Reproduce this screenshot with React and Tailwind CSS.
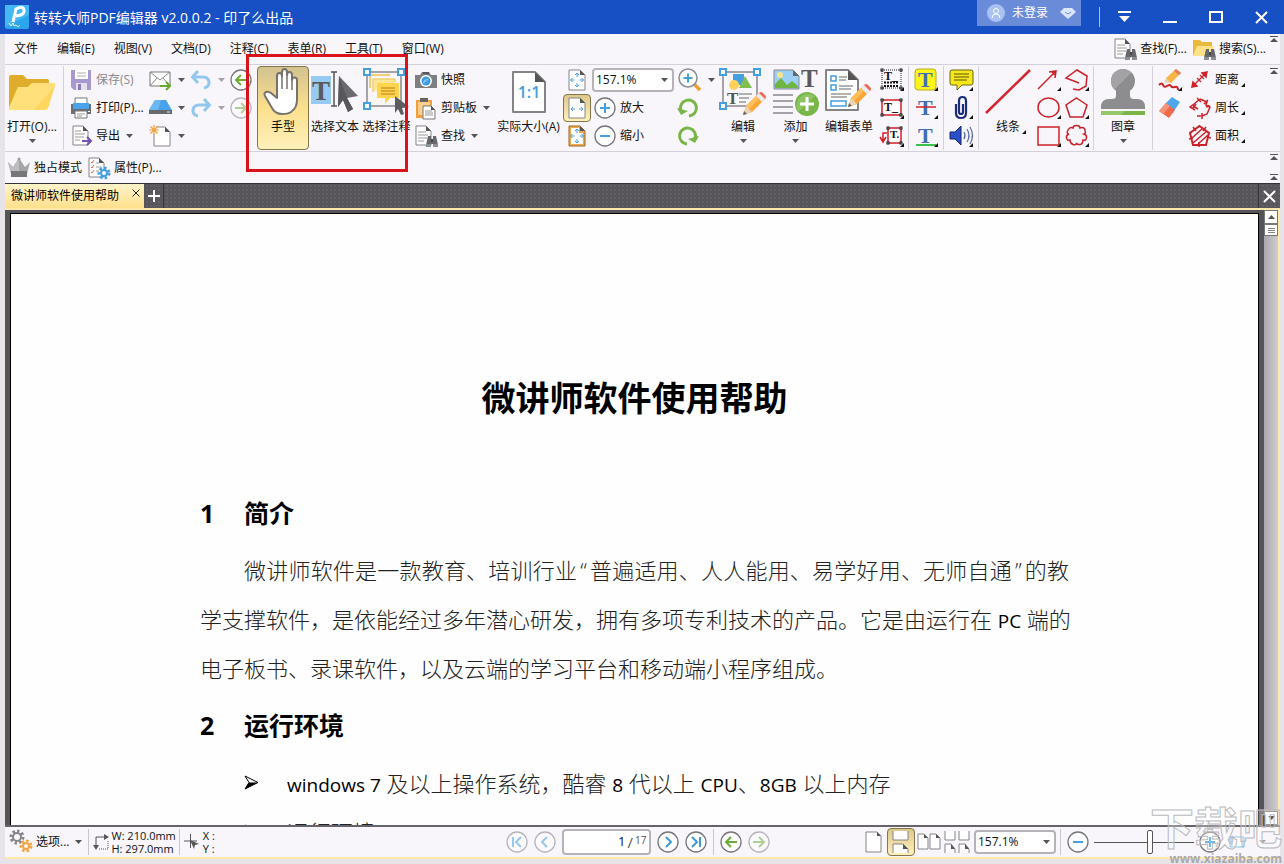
import { useState } from 'react';

const MENUS = ['文件', '编辑(E)', '视图(V)', '文档(D)', '注释(C)', '表单(R)', '工具(T)', '窗口(W)'];
const ZOOMS = ['50%', '100%', '157.1%', '200%'];

function Svg({ w, h = w, children, className = '' }) {
  return (
    <svg width={w} height={h} viewBox={`0 0 ${w} ${h}`} fill="none" className={`shrink-0 overflow-visible ${className}`} aria-hidden="true">
      {children}
    </svg>
  );
}

function Caret({ faded }) {
  return (
    <Svg w={7} h={4}>
      <path d="M0 0h7L3.5 4z" fill={faded ? '#a5a3a8' : '#555'} />
    </Svg>
  );
}

// small black corner that marks a tool with variants
const Corner = ({ x = 24, y = 23 }) => <path d={`M${x} ${y - 4}v4h-4z`} fill="#111" />;

/* ---------- drawing parts shared by several icons ---------- */

const PageShape = ({ x = 0, y = 0, w = 18, h = 20, c = 5, fill = '#fff', stroke = '#858388', sw = 1 }) => (
  <g transform={`translate(${x} ${y})`}>
    <path d={`M1 1h${w - 2 - c}l${c} ${c}v${h - 2 - c}h-${w - 2}z`} fill={fill} stroke={stroke} strokeWidth={sw} strokeLinejoin="round" />
    <path d={`M${w - 1 - c} 1v${c}h${c}z`} fill="#555" />
  </g>
);

const Binoculars = ({ x, y }) => (
  <g transform={`translate(${x} ${y})`}>
    <path d="M2 0h3v3h2V0h3l2 9v2H7V8H5v3H0V9z" fill="#66686c" />
    <path d="M0 8h5v3H0zM7 8h5v3H7z" fill="#8b8f96" />
    <path d="M5 3h2v3H5z" fill="#45474b" />
  </g>
);

const Pencil = ({ x, y }) => (
  <g transform={`translate(${x} ${y})`}>
    <path d="M0 24l3-9 13-13 6 6L9 21z" fill="#fba738" />
    <path d="M13 5l3-3 6 6-3 3z" fill="#e8edf5" />
    <path d="M16 2q2-2 4 0l2 2q2 2 0 4z" fill="#ee6b53" />
    <path d="M3 15l10-10 3 3L6 18z" fill="#ffc05b" />
    <path d="M0 24l3-9 6 6z" fill="#e9d3b2" />
    <path d="M0 24l1-4 3 3z" fill="#666" />
  </g>
);

const Plus = ({ cx, cy, r = 4, color = '#439fe0' }) => (
  <path d={`M${cx - r} ${cy}h${r * 2}M${cx} ${cy - r}v${r * 2}`} stroke={color} strokeWidth="2" />
);

const FourArrows = ({ c = '#4b9fdb' }) => (
  <g stroke={c}>
    <path d="M10 4v4M10 14v4M3.500 11h4M12.500 11h4" />
    <path d="M8 6l2-2 2 2M8 16l2 2 2-2M5.500 9l-2 2 2 2M14.500 9l2 2-2 2" />
  </g>
);

/* ---------- icons ---------- */

const FolderBig = () => (
  <Svg w={48} h={40}>
    <path d="M1 5q0-2 2-2h12l4 4h20q2 0 2 2v25H1z" fill="#e0ac2c" />
    <path d="M1 36L10 15h10l4-4h21q3 0 2 3l-7 22q-1 2-3 2H3q-2 0-2-2z" fill="#ffd75e" />
    <path d="M1 36L10 15h10l4-4h21q3 0 2 3L26 38H3q-2 0-2-2z" fill="#ffe07a" />
  </Svg>
);

const SaveIcon = () => (
  <Svg w={22}>
    <path d="M1 1h20v20H4l-3-3z" fill="#a898cf" />
    <path d="M5 1h13v9H5z" fill="#fff" />
    <path d="M7 4h9M7 7h9" stroke="#aaa" />
    <path d="M6 14h11v7H6z" fill="#e4e1ea" />
    <path d="M8 15h3v6H8z" fill="#8b7bb8" />
  </Svg>
);

const PrintIcon = () => (
  <Svg w={22}>
    <path d="M5 7V1h12v6" fill="#fff" stroke="#777" />
    <path d="M1 7h20v10H1z" fill="#6b6e72" />
    <path d="M3 6h16v6H3z" fill="#48a3ea" />
    <path d="M18 14h2v1h-2z" fill="#fff" />
    <path d="M5 14h12v7H5z" fill="#fff" stroke="#777" />
    <path d="M7 17h8M7 19h5" stroke="#999" />
  </Svg>
);

const ExportIcon = () => (
  <Svg w={22}>
    <PageShape x={2} y={0} w={17} h={21} />
    <path d="M5 6h6M5 9h10M5 12h9M5 15h5" stroke="#999" />
    <path d="M12 16h8M17 12l4 4-4 4" stroke="#7650b0" strokeWidth="2" />
  </Svg>
);

const MailIcon = () => (
  <Svg w={23} h={22}>
    <path d="M1 3h20v14H1z" fill="#fff" stroke="#77757a" />
    <path d="M1 3l10 8L21 3M1 17l7-8M21 17l-7-8" stroke="#88868b" />
    <path d="M11 17h9M17 13l4 4-4 4" stroke="#68a92b" strokeWidth="2" />
  </Svg>
);

const ScanIcon = () => (
  <Svg w={23} h={22}>
    <path d="M6 3h11l6 10H0z" fill="#48a3ea" />
    <path d="M6 3h6L9 13H0z" fill="#6db8f2" />
    <path d="M0 13h23v4H0z" fill="#66696e" />
    <path d="M18 15h3" stroke="#e8e8e8" />
  </Svg>
);

const NewIcon = () => (
  <Svg w={23} h={22}>
    <PageShape x={4} y={1} w={18} h={21} />
    <circle cx="5" cy="5" r="4" fill="#f8f6fa" />
    <path d="M5 0v10M0 5h10M1.500 1.500l7 7M8.500 1.500l-7 7" stroke="#f0a23a" strokeWidth="1.200" />
  </Svg>
);

const UndoIcon = ({ flip }) => (
  <Svg w={22}>
    <g transform={flip ? 'translate(22 0) scale(-1 1)' : undefined} stroke="#93c7ee" strokeWidth="3">
      <path d="M3 8h10q6 0 6 6 0 4-5 5" />
      <path d="M8 2L2.500 8 8 14" />
    </g>
  </Svg>
);

const CIRCLE_ICONS = {
  back: <path d="M17 11H6M11 6l-5 5 5 5" stroke="#6cab35" strokeWidth="2" />,
  forward: <path d="M5 11h11M11 6l5 5-5 5" stroke="#6cab35" strokeWidth="2" />,
  first: <path d="M7 6v10M15 6l-5 5 5 5" stroke="#3d98dc" strokeWidth="2" />,
  prev: <path d="M13 6l-5 5 5 5" stroke="#3d98dc" strokeWidth="2" />,
  next: <path d="M9 6l5 5-5 5" stroke="#3d98dc" strokeWidth="2" />,
  last: <path d="M15 6v10M7 6l5 5-5 5" stroke="#3d98dc" strokeWidth="2" />,
  plus: <Plus cx={11} cy={11} r={5} />,
  minus: <path d="M6 11h10" stroke="#439fe0" strokeWidth="2" />,
};

const CircleIcon = ({ kind, faded }) => (
  <Svg w={22} className={faded ? 'opacity-50' : ''}>
    <circle cx="11" cy="11" r="10" fill="#fff" stroke="#77757a" strokeWidth="1.300" />
    {CIRCLE_ICONS[kind]}
  </Svg>
);

const HandIcon = () => (
  <Svg w={40} h={50}>
    <path
      d="M14 31V9q0-3 2.500-3T19 9V5q0-3 2.500-3T24 5v3q0-3 2.500-3T29 8v5q0-2.500 2.500-2.500T34 13v20q0 8-6 12-3 2-9 2-7 0-10-6L2 29q-1.500-3 1-4t5 1z"
      fill="#fff" stroke="#77736c" strokeWidth="2" strokeLinejoin="round" />
    <path d="M19 8v14M24 8v14M29 12v11" stroke="#77736c" strokeWidth="1.500" />
  </Svg>
);

const SelectTextIcon = () => (
  <Svg w={48} h={48}>
    <path d="M0 8h20v28H0z" fill="#96caf5" />
    <text x="1" y="32" fontSize="27" fontWeight="bold" fill="#5a5a5e" className="font-['Liberation_Serif',serif]">T</text>
    <path d="M20 4h6M20 38h6M23 4v34" stroke="#555" strokeWidth="1.500" />
    <path d="M28 8l19 20-11 2 6 11-5 3-5-12-5 7z" fill="#6b6a6e" />
    <path d="M28 8l8 22 6 11-5 3-5-12-5 7z" fill="#58575b" />
  </Svg>
);

const SelectNoteIcon = () => (
  <Svg w={48} h={48}>
    <path d="M4 4h34v34H4z" stroke="#8a888d" strokeWidth="1.500" />
    <path d="M7 20V7h20" stroke="#f1c14b" strokeWidth="1.500" />
    <path d="M10 24V11h22v3" fill="#ffe697" stroke="#f1c14b" />
    <path d="M14 15h22v15h-9l-5 6v-6h-8z" fill="#ffd44c" />
    <path d="M18 20h14M18 23h14M18 26h14" stroke="#d19a2c" strokeWidth="1.500" />
    <path d="M1 1h6v6H1zM35 1h6v6h-6zM1 35h6v6H1z" fill="#fff" stroke="#439fe0" strokeWidth="2" />
    <path d="M32 28l14 11-7 1 2 6-3 1-3-6-3 4z" fill="#5d5c60" />
  </Svg>
);

const CameraIcon = () => (
  <Svg w={22}>
    <path d="M0 6h5l2-3h7l2 3h6v13H0z" fill="#7d7f83" />
    <path d="M8 3h6v2H8z" fill="#55575b" />
    <circle cx="11" cy="12" r="6" fill="#fff" />
    <circle cx="11" cy="12" r="4.500" fill="#3e9ae4" />
    <path d="M8 15a4.500 4.500 0 0 1 6-5z" fill="#7cc2f5" />
  </Svg>
);

const ClipboardIcon = () => (
  <Svg w={22} h={23}>
    <path d="M1 3h16v18H1z" fill="#f3a03b" />
    <path d="M3 5h12v13H3z" fill="#ffd08c" />
    <path d="M5 1h8v4H5z" fill="#666" />
    <path d="M8 9h8l4 4v9H8z" fill="#fff" stroke="#777" />
    <path d="M16 9v4h4z" fill="#555" />
    <path d="M10 14h7M10 16h8M10 18h8" stroke="#999" />
  </Svg>
);

const FindIcon = () => (
  <Svg w={22} h={23}>
    <PageShape x={0} y={0} w={17} h={21} />
    <path d="M3 7h8M3 10h10M3 13h9M3 16h6" stroke="#999" />
    <Binoculars x={11} y={11} />
  </Svg>
);

const SearchFolderIcon = () => (
  <Svg w={22} h={23}>
    <path d="M0 2h7l2 2h10v14H0z" fill="#e8b93b" />
    <path d="M0 18L4 8h17l-4 10z" fill="#ffe28a" />
    <Binoculars x={11} y={11} />
  </Svg>
);

const ActualSizeIcon = () => (
  <Svg w={34} h={42}>
    <PageShape x={0} y={0} w={34} h={42} c={10} sw={2} />
    <text x="17" y="27" textAnchor="middle" fontSize="16" fontWeight="600" fill="#439fe0">1:1</text>
  </Svg>
);

const FitPageIcon = () => (
  <Svg w={20} h={22}>
    <PageShape x={1} y={0} w={18} h={22} />
    <FourArrows />
  </Svg>
);

const FitWidthIcon = () => (
  <Svg w={20} h={22}>
    <PageShape x={1} y={0} w={18} h={22} />
    <path d="M4 12h4M12 12h4M6 10l-2 2 2 2M14 10l2 2-2 2" stroke="#4b9fdb" />
  </Svg>
);

const FitVisibleIcon = () => (
  <Svg w={20} h={22}>
    <PageShape x={1} y={0} w={18} h={22} fill="#f0a84e" stroke="#9a6b2f" />
    <path d="M4 3h8v5h4v11H4z" fill="#fff" />
    <FourArrows />
  </Svg>
);

const MagnifierIcon = () => (
  <Svg w={24}>
    <path d="M16 16l6 6" stroke="#f0a03a" strokeWidth="3.500" />
    <circle cx="10" cy="10" r="9" fill="#fff" stroke="#8a8f96" strokeWidth="1.500" />
    <Plus cx={10} cy={10} r={4.5} />
  </Svg>
);

const RotateIcon = ({ flip }) => (
  <Svg w={24}>
    <g transform={flip ? 'translate(24 0) scale(-1 1)' : undefined}>
      <path d="M5 15a8 8 0 1 1 8 5" stroke="#79b548" strokeWidth="3" />
      <path d="M1 12l4 7 7-4z" fill="#79b548" />
    </g>
  </Svg>
);

const EditIcon = () => (
  <Svg w={48} h={48}>
    <path d="M4 4h34v34H4z" stroke="#8a888d" strokeWidth="1.500" />
    <path d="M14 6h11v11H14z" fill="#439fe0" />
    <path d="M20 20l6-12 7 12z" fill="#7fbf4f" />
    <circle cx="15" cy="17" r="5" fill="#ffd35b" />
    <text x="8" y="36" fontSize="17" fontWeight="bold" fill="#555" className="font-['Liberation_Serif',serif]">T</text>
    <path d="M20 26h13M20 30h10M20 34h7" stroke="#999" strokeWidth="1.500" />
    <path d="M1 1h6v6H1zM35 1h6v6h-6zM1 35h6v6H1z" fill="#fff" stroke="#439fe0" strokeWidth="2" />
    <Pencil x={24} y={23} />
  </Svg>
);

const AddIcon = () => (
  <Svg w={46} h={48}>
    <path d="M1 2h19l6 6v13H1z" fill="#9bd0f3" stroke="#8a888d" />
    <path d="M2 20v-4l6-6 6 7 5-4 6 5v2z" fill="#6fb544" />
    <circle cx="7" cy="7" r="3" fill="#ffe38a" />
    <path d="M20 2v6h6z" fill="#666" />
    <text x="28" y="19" fontSize="25" fontWeight="bold" fill="#5a5a5e" className="font-['Liberation_Serif',serif]">T</text>
    <path d="M0 27h20M0 33h20M0 39h20M0 45h20" stroke="#8a888d" strokeWidth="1.500" />
    <circle cx="34" cy="36" r="12" fill="#78b648" />
    <path d="M25 44A12 12 0 0 1 42 28z" fill="#8fc463" />
    <path d="M27 36h14M34 29v14" stroke="#fff" strokeWidth="3" />
  </Svg>
);

const EditFormIcon = () => (
  <Svg w={48} h={48}>
    <PageShape x={0} y={1} w={34} h={42} c={10} sw={2} />
    <path d="M6 8h5v5H6zM6 17h5v5H6z" stroke="#439fe0" strokeWidth="1.500" />
    <path d="M14 9h8M14 12h7M14 18h14M14 21h12M6 26h20M6 29h16" stroke="#999" strokeWidth="1.500" />
    <path d="M6 33h15v5H6z" stroke="#439fe0" strokeWidth="1.500" />
    <Pencil x={23} y={15} />
  </Svg>
);

const Knobs = ({ x1, y1, x2, y2, color = '#111' }) => (
  <g fill="#fff" stroke={color}>
    {[[x1, y1], [x2, y1], [x1, y2], [x2, y2]].map(([x, y]) => (
      <rect key={`${x}-${y}`} x={x - 1} y={y - 1} width="2" height="2" />
    ))}
  </g>
);

const FieldIcon = ({ kind }) => (
  <Svg w={24}>
    {kind === 'keys' && (
      <>
        <path d="M2 2h19v18H2z" stroke="#222" strokeDasharray="1 1" />
        <text x="4" y="12" fontSize="12" fontWeight="bold" fill="#111" className="font-['Liberation_Serif',serif]">T_</text>
        <path d="M4 14.500h15M4 18h15" stroke="#111" strokeWidth="2" strokeDasharray="2 1" />
        <Knobs x1={2} y1={2} x2={21} y2={20} />
      </>
    )}
    {kind === 'box' && (
      <>
        <path d="M2 4h19v15H2z" fill="#fff" stroke="#cf1f28" strokeWidth="1.500" />
        <text x="4" y="15" fontSize="12" fontWeight="bold" fill="#111" className="font-['Liberation_Serif',serif]">T_</text>
        <Knobs x1={2} y1={4} x2={21} y2={19} />
      </>
    )}
    {kind === 'callout' && (
      <>
        <path d="M8 4h13v15H8z" fill="#fff" stroke="#cf1f28" strokeWidth="1.500" />
        <path d="M7 9H3v8M0 13l3 5 3-5" stroke="#cf1f28" strokeWidth="1.500" />
        <text x="10" y="14" fontSize="11" fontWeight="bold" fill="#111" className="font-['Liberation_Serif',serif]">T.</text>
        <Knobs x1={8} y1={4} x2={21} y2={19} />
      </>
    )}
    <Corner />
  </Svg>
);

const MarkupIcon = ({ kind }) => (
  <Svg w={24}>
    {kind === 'highlight' && <rect x="1" y="1" width="21" height="21" rx="3" fill="#fdf31d" stroke="#b9ae1a" />}
    <text x="4" y="19" fontSize="22" fontWeight="bold" fill="#3f6fb8" className="font-['Liberation_Serif',serif]">T</text>
    {kind === 'strike' && <path d="M2 11h20" stroke="#d2222b" strokeWidth="1.500" />}
    {kind === 'underline' && <path d="M2 21h20" stroke="#3cc24a" strokeWidth="2" />}
    <Corner />
  </Svg>
);

const NoteIcon = () => (
  <Svg w={25} h={24}>
    <path d="M3 2h19q2 0 2 2v11q0 2-2 2h-9l-5 5v-5H3q-2 0-2-2V4q0-2 2-2z" fill="#f6e71a" stroke="#6d6713" />
    <path d="M5 6h15M5 9h15M5 12h13" stroke="#5c560f" />
    <Corner />
  </Svg>
);

const ClipIcon = () => (
  <Svg w={24}>
    <path d="M14 8v8q0 2-2 2t-2-2V5q0-4 3.500-4T17 5v12q0 5-5 5t-5-5V8" stroke="#1c2c7c" strokeWidth="2.200" />
    <Corner />
  </Svg>
);

const SoundIcon = () => (
  <Svg w={25} h={24}>
    <path d="M1 8h5l6-6v19l-6-6H1z" fill="#2a50c8" stroke="#14246c" />
    <path d="M15 8q2 3.500 0 7M18 5q4 6.500 0 13M21 3q5 8.500 0 17" stroke="#5b6ba0" strokeWidth="1.200" />
    <Corner />
  </Svg>
);

const RED = '#cc2229';

const ShapeIcon = ({ kind }) => (
  <Svg w={24}>
    <g stroke={RED} strokeWidth="1.500">
      {kind === 'arrow' && <path d="M1 21L19 3M12 4l7-1-1 7M15 4l3 3" />}
      {kind === 'polyline' && <path d="M14 15L1 10l11-8 10 6-1 10-7 4-6-1" />}
      {kind === 'ellipse' && <ellipse cx="11.500" cy="11.500" rx="10.500" ry="9.500" />}
      {kind === 'polygon' && <path d="M11.500 2L22 9l-4 12H5L1 9z" />}
      {kind === 'rect' && <path d="M1 3h21v18H1z" />}
      {kind === 'cloud' && (
        <path d="M8 4q0-2.500 3.500-2.500T15 4q4-1.500 5 2t-1 4q3 1 2.500 4T18 16q0 4-3 4.500T11.500 19Q11 21.500 8 20.500T5 16q-3 1-3.500-2T4 10Q1 9.500 3 6t5-2z" />
      )}
    </g>
    <Corner />
  </Svg>
);

const LineIcon = () => (
  <Svg w={46} h={48}>
    <path d="M1 45L45 2" stroke="#d02730" strokeWidth="2.500" />
  </Svg>
);

const StampIcon = () => (
  <Svg w={44} h={48}>
    <path d="M15 20h14v8q0 3 4 3h3q8 0 8 8v2H0v-2q0-8 8-8h3q4 0 4-3z" fill="#8d8d8f" />
    <circle cx="22" cy="13" r="12" fill="#8d8d8f" />
    <path d="M13.500 21.500A12 12 0 0 1 30.500 4.500z" fill="#a3a3a5" />
    <path d="M0 43h44v4H0z" fill="#7cb547" />
    <path d="M0 43h24l-4 4H0z" fill="#96c76a" />
  </Svg>
);

const DrawIcon = () => (
  <Svg w={24}>
    <path d="M1 17q3-3 4 0t4 1 4 0 4 1 3 3" stroke={RED} strokeWidth="2" />
    <path d="M7 15l1-5L18 1l5 4-10 10z" fill="#f6b545" />
    <path d="M18 1l5 4-2 2-5-4z" fill="#e8795f" />
    <path d="M7 15l1-5 5 5z" fill="#e9d3b2" />
    <Corner />
  </Svg>
);

const EraserIcon = () => (
  <Svg w={24}>
    <path d="M14 1l8 5-6 9-9-7z" fill="#4da6ea" />
    <path d="M8 7l9 7-6 8-10-7z" fill="#f06a4c" />
    <path d="M8 7l4 3-7 8-4-3z" fill="#f8937b" />
  </Svg>
);

const MeasureIcon = ({ kind }) => (
  <Svg w={22} h={24}>
    <g stroke={RED} strokeWidth="1.500">
      {kind === 'distance' && (
        <>
          <path d="M5 17L16 6M8 10l4 4M11 7l4 4" strokeWidth="1.200" />
          <path d="M18 4l-5 1 4 4zM3 19l1-5 4 4z" fill={RED} />
        </>
      )}
      {kind === 'perimeter' && (
        <path d="M11 3l7 3-1 3 4 2-3 7-5 2M8 20h4M5 8L1 11l5 3M5 8l6-5M8 2l4 4M4 10l5 3M19 4l-4 4M17 11l4-1M13 17v6M4 12l3-4" />
      )}
      {kind === 'area' && (
        <>
          <path d="M10.500 2L20 9l-3 12H4L1 9z" strokeWidth="2" />
          <path d="M3 14L14 4M4 19L18 7M9 20L19 11" />
          <path d="M4 3l3 4M17 3l-3 4M0 15l4-1M22 14l-4-1M10 18v5" />
        </>
      )}
    </g>
  </Svg>
);

const CrownIcon = () => (
  <Svg w={22}>
    <path d="M0 5l5 5 6-9 6 9 5-5-3 12H3z" fill="#a5a5a7" />
    <path d="M3 14h16v6H3z" fill="#77777a" />
    <path d="M11 1v13H3L0 5l5 5z" fill="#bdbdbf" />
    <circle cx="11" cy="2" r="1.500" fill="#999" />
  </Svg>
);

const Gear = ({ cx, cy, r, color, hole = '#f8f6fa' }) => (
  <g>
    <circle cx={cx} cy={cy} r={r - 1} stroke={color} strokeWidth="3" strokeDasharray="2.400 2.200" />
    <circle cx={cx} cy={cy} r={r - 2} fill={color} />
    <circle cx={cx} cy={cy} r={r - 4} fill={hole} />
  </g>
);

const PropsIcon = () => (
  <Svg w={22}>
    <PageShape x={0} y={0} w={17} h={21} />
    <path d="M3 5l1 1 2-3M3 10l1 1 2-3M3 15l1 1 2-3" stroke="#e2653f" />
    <path d="M8 6h3M8 10h5M8 14h3" stroke="#999" />
    <Gear cx={16} cy={16} r={6} color="#439fe0" hole="#fff" />
  </Svg>
);

const GearsIcon = () => (
  <Svg w={24} h={26}>
    <Gear cx={8} cy={8} r={7} color="#85858a" />
    <Gear cx={17} cy={17} r={6} color="#f3a445" />
  </Svg>
);

const CollapseMark = ({ className = '' }) => (
  <Svg w={8} h={7} className={className}>
    <path d="M0 .5h8" stroke="#555" />
    <path d="M0 6h8L4 2z" fill="#555" />
  </Svg>
);

const LogoIcon = () => (
  <Svg w={24} h={24}>
    <rect width="24" height="24" rx="2" fill="#2aa5ee" />
    <path d="M0 0h24v10L0 22z" fill="#43b8f5" />
    <path d="M8 17L11 4q7-4 8 1t-8 6" stroke="#fff" strokeWidth="3" />
    <path d="M4 18l2 3 2-3 1 3q2-2 3 0t3-1" stroke="#fff" />
  </Svg>
);

/* ---------- controls ---------- */

const CornerMark = () => <Svg w={4} className="ml-0.5 mt-2.5"><path d="M4 0v4H0z" fill="#111" /></Svg>;

function Row({ icon, label, caret, faded, corner }) {
  return (
    <button aria-label={label ? undefined : 'tool'} className={`flex h-7 shrink-0 items-center whitespace-nowrap text-left ${faded ? 'text-[#8b898e]' : ''}`}>
      {icon}
      {label && <span className="ml-1">{label}</span>}
      {corner && <CornerMark />}
      {caret && <span className="ml-1.5"><Caret faded={caret === 'faded'} /></span>}
    </button>
  );
}

function Big({ icon, label, caret, corner, active, className = '' }) {
  return (
    <button
      aria-pressed={active}
      className={`flex h-[84px] shrink-0 flex-col items-center whitespace-nowrap ${active ? 'rounded-sm border border-[#85754a] bg-linear-to-b from-[#d3c291] via-[#fbe08c] to-[#fff0ba]' : 'border border-transparent'} ${className}`}
    >
      <span className="flex h-[50px] items-center">{icon}</span>
      <span className="mb-0.5 flex h-5 items-center">
        {corner && <span className="w-1.5" />}
        {label}
        {corner && <CornerMark />}
      </span>
      {caret && <Caret />}
    </button>
  );
}

const Col = ({ className = '', children }) => <div className={`flex h-[84px] shrink-0 flex-col ${className}`}>{children}</div>;

function ZoomSelect({ value, onChange, label }) {
  return (
    <div className="relative h-6 w-[82px] shrink-0">
      <select
        aria-label={label}
        value={value}
        onChange={(e) => onChange(e.target.value)}
        className="h-full w-full appearance-none rounded-sm border-2 border-[#b5b3b9] bg-white pl-0.5 text-[12px] leading-none"
      >
        {ZOOMS.map((z) => <option key={z}>{z}</option>)}
      </select>
      <span className="pointer-events-none absolute right-1.5 top-2.5"><Caret /></span>
    </div>
  );
}

function TitleBar() {
  return (
    <header className="flex h-[34px] shrink-0 items-center bg-[#1650c4] pl-[5px] text-white">
      <LogoIcon />
      <h1 className="ml-[5px] text-[14px]">转转大师PDF编辑器 v2.0.0.2 - 印了么出品</h1>
      <button className="ml-auto flex h-[26px] w-[104px] items-center self-start bg-[#6a8bd8] pl-2.5">
        <Svg w={18}>
          <circle cx="9" cy="9" r="9" fill="#a9c1f3" />
          <circle cx="9" cy="7" r="2.500" stroke="#fff" />
          <path d="M5 14q0-4 4-4t4 4" stroke="#fff" />
        </Svg>
        <span className="ml-[7px]">未登录</span>
        <Svg w={16} h={11} className="ml-3">
          <path d="M4 0h8l4 4-8 7-8-7z" fill="#dbe6fc" />
          <path d="M5 4l3 2 3-2" stroke="#6a8bd8" />
        </Svg>
      </button>
      <div className="ml-[18px] h-5 w-px bg-[#a9c1ee]" />
      <div className="ml-[18px] mr-4 flex items-center gap-8">
        <button aria-label="菜单"><Svg w={13} h={12}><path d="M0 1h13" stroke="#fff" strokeWidth="2" /><path d="M1 5h11l-5.500 6z" fill="#fff" /></Svg></button>
        <button aria-label="最小化"><Svg w={14} h={12}><path d="M0 11h14" stroke="#fff" strokeWidth="2" /></Svg></button>
        <button aria-label="最大化"><Svg w={14} h={12}><path d="M1 1h12v10H1z" stroke="#fff" strokeWidth="2" /></Svg></button>
        <button aria-label="关闭"><Svg w={13} h={13}><path d="M1 1l11 11M12 1L1 12" stroke="#fff" strokeWidth="2" /></Svg></button>
      </div>
    </header>
  );
}

function MenuBar() {
  return (
    <nav className="flex h-[31px] shrink-0 items-center border-b border-[#d3d1d7] pl-[9px]">
      <div className="flex gap-[19px]">
        {MENUS.map((m) => <button key={m} className="whitespace-nowrap">{m}</button>)}
      </div>
      <div className="ml-auto flex items-center gap-1.5">
        <Row icon={<FindIcon />} label="查找(F)..." />
        <Row icon={<SearchFolderIcon />} label="搜索(S)..." />
      </div>
      <CollapseMark className="mb-5 ml-1 mr-0.5" />
    </nav>
  );
}

function Ribbon({ zoom, setZoom }) {
  return (
    <div className="flex h-[87px] shrink-0 items-start border-b border-[#d3d1d7] pt-px">
      <Big className="w-[58px] pr-1" icon={<FolderBig />} label="打开(O)..." caret />
      <Col className="w-[85px] border-l border-[#d3d1d7] pl-[6px]">
        <Row icon={<SaveIcon />} label="保存(S)" faded />
        <Row icon={<PrintIcon />} label="打印(P)..." />
        <Row icon={<ExportIcon />} label="导出" caret />
      </Col>
      <Col className="w-10 pl-px">
        <Row icon={<MailIcon />} caret />
        <Row icon={<ScanIcon />} caret />
        <Row icon={<NewIcon />} caret />
      </Col>
      <Col className="w-10 pl-0.5">
        <Row icon={<UndoIcon />} caret="faded" />
        <Row icon={<UndoIcon flip />} caret="faded" />
      </Col>
      <Col className="w-[29px] pl-0.5">
        <Row icon={<CircleIcon kind="back" />} />
        <Row icon={<CircleIcon kind="forward" faded />} />
      </Col>
      <Big className="w-[52px]" icon={<HandIcon />} label="手型" active />
      <Big className="w-[52px]" icon={<SelectTextIcon />} label="选择文本" />
      <Big className="w-[51px]" icon={<SelectNoteIcon />} label="选择注释" />
      <Col className="w-[82px] pl-[3px]">
        <Row icon={<CameraIcon />} label="快照" />
        <Row icon={<ClipboardIcon />} label="剪贴板" caret />
        <Row icon={<FindIcon />} label="查找" caret />
      </Col>
      <Big className="w-[69px]" icon={<ActualSizeIcon />} label="实际大小(A)" />
      <Col className="w-7">
        <button aria-label="适合页面" className="flex h-7 items-center justify-center"><FitPageIcon /></button>
        <button aria-label="适合宽度" aria-pressed className="flex h-7 items-center justify-center rounded-sm border border-[#85754a] bg-linear-to-b from-[#dcc88b] to-[#fff0ba]"><FitWidthIcon /></button>
        <button aria-label="适合可见" className="flex h-7 items-center justify-center"><FitVisibleIcon /></button>
      </Col>
      <Col className="w-[125px] pl-px">
        <div className="flex h-7 items-center">
          <ZoomSelect label="缩放" value={zoom} onChange={setZoom} />
          <span className="ml-1"><Row icon={<MagnifierIcon />} caret /></span>
        </div>
        <div className="flex h-7 items-center justify-between pl-0.5 pr-4">
          <Row icon={<CircleIcon kind="plus" />} label="放大" />
          <Row icon={<RotateIcon />} />
        </div>
        <div className="flex h-7 items-center justify-between pl-0.5 pr-4">
          <Row icon={<CircleIcon kind="minus" />} label="缩小" />
          <Row icon={<RotateIcon flip />} />
        </div>
      </Col>
      <Big className="w-[54px]" icon={<EditIcon />} label="编辑" caret />
      <Big className="w-[51px]" icon={<AddIcon />} label="添加" caret />
      <Big className="w-14" icon={<EditFormIcon />} label="编辑表单" />
      <Col className="w-8 border-r border-[#d3d1d7] pl-[3px]">
        <Row icon={<FieldIcon kind="keys" />} />
        <Row icon={<FieldIcon kind="box" />} />
        <Row icon={<FieldIcon kind="callout" />} />
      </Col>
      <Col className="w-[35px] border-r border-[#d3d1d7] pl-[5px]">
        <Row icon={<MarkupIcon kind="highlight" />} />
        <Row icon={<MarkupIcon kind="strike" />} />
        <Row icon={<MarkupIcon kind="underline" />} />
      </Col>
      <Col className="w-[35px] border-r border-[#d3d1d7] pl-[5px]">
        <Row icon={<NoteIcon />} />
        <Row icon={<ClipIcon />} />
        <Row icon={<SoundIcon />} />
      </Col>
      <Big className="w-14 pl-0.5" icon={<LineIcon />} label="线条" corner />
      <Col className="w-[29px] pl-0.5">
        <Row icon={<ShapeIcon kind="arrow" />} />
        <Row icon={<ShapeIcon kind="ellipse" />} />
        <Row icon={<ShapeIcon kind="rect" />} />
      </Col>
      <Col className="w-[30px] border-r border-[#d3d1d7] pl-px">
        <Row icon={<ShapeIcon kind="polyline" />} />
        <Row icon={<ShapeIcon kind="polygon" />} />
        <Row icon={<ShapeIcon kind="cloud" />} />
      </Col>
      <Col className="w-[59px] items-center border-r border-[#d3d1d7]">
        <Big icon={<StampIcon />} label="图章" caret />
      </Col>
      <Col className="w-[34px] pl-[5px]">
        <Row icon={<DrawIcon />} />
        <Row icon={<EraserIcon />} />
      </Col>
      <Col className="pl-0.5">
        <Row icon={<MeasureIcon kind="distance" />} label="距离" corner />
        <Row icon={<MeasureIcon kind="perimeter" />} label="周长" corner />
        <Row icon={<MeasureIcon kind="area" />} label="面积" corner />
      </Col>
      <CollapseMark className="ml-auto mr-0.5 mt-0.5" />
    </div>
  );
}

function TabBar() {
  return (
    <div className="flex h-[25px] shrink-0 items-stretch border-t border-[#333] bg-[radial-gradient(#626064_30%,#58565a_32%)] bg-[size:4px_4px] text-white">
      <div className="flex w-[139px] items-center bg-linear-to-b from-[#fff3c9] to-[#ffe08c] pl-1.5 pr-1 text-black">
        <span className="whitespace-nowrap">微讲师软件使用帮助</span>
        <button aria-label="关闭标签" className="mb-1.5 ml-auto"><Svg w={8}><path d="M.5.5l7 7M7.500.5l-7 7" stroke="#222" /></Svg></button>
      </div>
      <button aria-label="新建标签" className="flex w-5 items-center justify-center border-r border-[#333]"><Svg w={12}><Plus cx={6} cy={6} r={6} color="#fff" /></Svg></button>
      <button aria-label="关闭文档" className="ml-auto flex w-[22px] items-center justify-center border-l border-[#333]"><Svg w={13}><path d="M1 1l11 11M12 1L1 12" stroke="#fff" strokeWidth="2" /></Svg></button>
    </div>
  );
}

const Bullet = ({ children }) => (
  <li className="flex h-[49px] items-center pl-11">
    <Svg w={15} h={15} className="mr-7"><path d="M1 1l13 6.500L1 14l4-6.500z" stroke="#000" /><path d="M5 7.500h9L1 14z" fill="#000" /></Svg>
    <span className="whitespace-nowrap">{children}</span>
  </li>
);

const En = ({ children }) => <span className="text-[19px] font-medium leading-none text-black">{children}</span>;
const Quote = ({ children }) => <span className="mx-[3px]">{children}</span>;

function Document() {
  return (
    <div className="flex min-h-0 flex-1 border-y-2 border-b-[#66646a] border-t-[#ffe8a8] bg-[#555357] pl-[5px] pt-[3px]">
      <article className="min-w-0 flex-1 overflow-hidden border border-b-0 border-black bg-[#fefefe] pt-[159px]">
        <div className="mx-auto w-[869px] max-w-full text-[22px] font-light leading-[48px] text-[#222]">
          <h2 className="mb-[66px] text-center text-[34px] font-bold leading-[50px] text-black">微讲师软件使用帮助</h2>
          <h3 className="mb-2 flex h-[49px] text-[25px] font-bold text-black"><span className="w-11">1</span>简介</h3>
          <p>
            <span className="block h-[49px] whitespace-nowrap pl-11 [text-align-last:justify]">
              微讲师软件是一款教育、培训行业<Quote>“</Quote>普遍适用、人人能用、易学好用、无师自通<Quote>”</Quote>的教
            </span>
            <span className="block h-[49px] whitespace-nowrap [text-align-last:justify]">学支撑软件，是依能经过多年潜心研发，拥有多项专利技术的产品。它是由运行在 <En>PC</En> 端的</span>
            <span className="block h-[49px] whitespace-nowrap">电子板书、录课软件，以及云端的学习平台和移动端小程序组成。</span>
          </p>
          <h3 className="my-2 flex h-[49px] text-[25px] font-bold text-black"><span className="w-11">2</span>运行环境</h3>
          <ul>
            <Bullet><En>windows 7</En> 及以上操作系统，酷睿 <En>8</En> 代以上 <En>CPU</En>、<En>8GB</En> 以上内存</Bullet>
            <Bullet>运行环境：<En>.net framework 4.0</En></Bullet>
          </ul>
        </div>
      </article>
      <div className="-mt-[3px] ml-[5px] flex w-4 flex-col items-center border-r-2 border-[#ffe8a8] bg-linear-to-r from-[#aaa8ac] to-[#cfcdd1]">
        <button aria-label="向上" className="flex h-3.5 w-full items-center justify-center border border-[#777] bg-white"><Svg w={7} h={4} className="rotate-180"><path d="M0 0h7L3.500 4z" fill="#555" /></Svg></button>
        <div className="flex h-3 w-full items-center justify-center border border-[#777] bg-white"><Svg w={7} h={5}><path d="M0 .5h7M0 2.500h7M0 4.500h7" stroke="#888" /></Svg></div>
        <button aria-label="向下" className="mt-auto flex h-3.5 w-full items-center justify-center border border-[#777] bg-white"><Caret /></button>
      </div>
    </div>
  );
}

const Sep = () => <div className="h-[26px] w-px shrink-0 bg-[#c9c7cd]" />;

function StatusBar({ zoom, setZoom }) {
  const [page, setPage] = useState('1');
  return (
    <footer className="grid h-8 shrink-0 grid-cols-[1fr_auto_1fr] items-center border-b-2 border-[#ffe8a8] pl-1 pr-3.5">
      <div className="flex items-center">
        <button className="flex items-center">
          <GearsIcon />
          <span className="ml-[3px] mr-1.5">选项...</span>
          <Caret />
        </button>
        <div className="ml-1.5"><Sep /></div>
        <Svg w={16} className="ml-[5px]">
          <path d="M2 14V3h9" stroke="#555" />
          <path d="M10 0l5 3-5 3zM-1 11h6l-3 5z" fill="#555" />
          <path d="M14 7v8M5 15h10" stroke="#555" strokeDasharray="1 1" />
        </Svg>
        <div className="ml-px mr-[3px] whitespace-nowrap text-[11px] leading-[13px]">
          <div>W: 210.0mm</div>
          <div>H: 297.0mm</div>
        </div>
        <Sep />
        <Svg w={16} className="ml-1">
          <path d="M0 7h13M6.500 0v14" stroke="#555" />
          <path d="M6 6l9 4-4 1-1 4z" fill="#555" />
        </Svg>
        <div className="ml-[3px] text-[11px] leading-[13px]">
          <div>X :</div>
          <div>Y :</div>
        </div>
      </div>

      <div className="flex items-center gap-1.5">
        <button aria-label="第一页"><CircleIcon kind="first" faded /></button>
        <button aria-label="上一页"><CircleIcon kind="prev" faded /></button>
        <label className="flex h-[26px] w-[89px] items-center rounded-sm border-2 border-[#b5b3b9] bg-white pr-0.5">
          <input aria-label="页码" value={page} onChange={(e) => setPage(e.target.value)} className="w-0 min-w-0 flex-1 bg-transparent text-right text-[13px] outline-none" />
          <span className="mx-0.5 text-[15px] text-[#555]">/</span>
          <span className="mb-1 text-[10px] text-[#555]">17</span>
        </label>
        <button aria-label="下一页"><CircleIcon kind="next" /></button>
        <button aria-label="最后一页"><CircleIcon kind="last" /></button>
        <Sep />
        <button aria-label="后退"><CircleIcon kind="back" /></button>
        <button aria-label="前进"><CircleIcon kind="forward" faded /></button>
      </div>

      <div className="flex items-center justify-end">
        <button aria-label="单页"><Svg w={18} h={22}><PageShape w={17} h={22} c={4} /></Svg></button>
        <button aria-label="连续" aria-pressed className="ml-1 flex h-7 w-7 items-center justify-center rounded-sm border border-[#85754a] bg-linear-to-b from-[#dcc88b] to-[#fff0ba]">
          <Svg w={18} h={22}>
            <path d="M1 0v9h15V0M1 22v-9h10l5 5v4" fill="#fff" stroke="#858388" />
            <path d="M11 13v5h5z" fill="#555" />
          </Svg>
        </button>
        <button aria-label="双页" className="ml-0.5"><Svg w={25} h={18}><PageShape w={12} h={17} c={4} /><PageShape x={12} w={12} h={17} c={4} /></Svg></button>
        <button aria-label="连续双页" className="ml-0.5 mr-1">
          <Svg w={26} h={22}>
            <path d="M1 0v9h10V0M15 0v9h10V0M1 22v-9h6l4 5v4M15 22v-9h6l4 5v4" fill="#fff" stroke="#858388" />
            <path d="M7 13v5h4zM21 13v5h4z" fill="#555" />
          </Svg>
        </button>
        <ZoomSelect label="页面缩放" value={zoom} onChange={setZoom} />
        <div className="ml-1"><Sep /></div>
        <button aria-label="缩小页面" className="ml-1.5"><CircleIcon kind="minus" /></button>
        <input
          type="range"
          aria-label="缩放比例"
          defaultValue="56"
          className="mx-[5px] h-6 w-[100px] appearance-none bg-transparent [&::-webkit-slider-runnable-track]:h-px [&::-webkit-slider-runnable-track]:bg-[#555] [&::-webkit-slider-thumb]:-mt-3 [&::-webkit-slider-thumb]:h-6 [&::-webkit-slider-thumb]:w-1.5 [&::-webkit-slider-thumb]:appearance-none [&::-webkit-slider-thumb]:rounded-xs [&::-webkit-slider-thumb]:border [&::-webkit-slider-thumb]:border-[#555] [&::-webkit-slider-thumb]:bg-white"
        />
        <button aria-label="放大页面"><CircleIcon kind="plus" /></button>
        <Svg w={16} h={12} className="ml-2"><path d="M3 1h10v10H3z" fill="#fff" stroke="#8ebfe6" /><path d="M3 1H1v10h2M13 1h2v10h-2" stroke="#6fb0e4" /></Svg>
        <div className="ml-3.5"><Caret faded /></div>
      </div>
    </footer>
  );
}

export default function App() {
  const [zoom, setZoom] = useState('157.1%');

  return (
    <div className="relative flex h-screen flex-col overflow-hidden bg-[#e6e4e8] font-['Open_Sans','Noto_Sans_CJK_SC',sans-serif] text-[12px] text-[#111]">
      <TitleBar />
      <main className="relative mb-[5px] ml-[5px] mr-1 flex min-h-0 flex-1 flex-col bg-[#f8f6fa]">
        <MenuBar />
        <Ribbon zoom={zoom} setZoom={setZoom} />
        <div className="flex h-[31px] shrink-0 items-center pl-[3px]">
          <Row icon={<CrownIcon />} label="独占模式" />
          <span className="ml-1.5"><Row icon={<PropsIcon />} label="属性(P)..." /></span>
          <div className="ml-auto mr-0.5 flex h-full flex-col justify-between py-0.5"><CollapseMark /><CollapseMark /></div>
        </div>
        <TabBar />
        <Document />
        <StatusBar zoom={zoom} setZoom={setZoom} />

        {/* red frame around the selection tools */}
        <div className="pointer-events-none absolute left-[241px] top-5 h-[118px] w-[162px] border-3 border-[#d9131a]" />
      </main>

      <div className="pointer-events-none absolute bottom-0 right-0.5 flex flex-col items-end whitespace-nowrap font-bold text-white/30 [-webkit-text-stroke:1px_#bbb9bd]">
        <span className="text-[44px] leading-[50px]">下载吧</span>
        <span className="text-[12px] leading-[11px] text-[#aaa8ac] [-webkit-text-stroke:0]">www.xiazaiba.com</span>
      </div>
    </div>
  );
}
